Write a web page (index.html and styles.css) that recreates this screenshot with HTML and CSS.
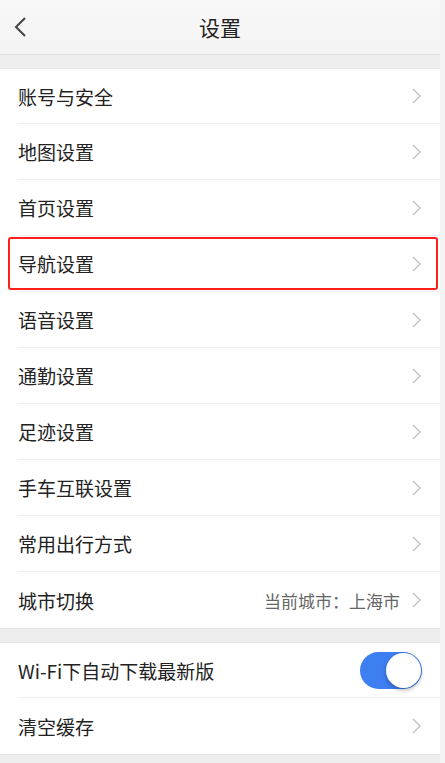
FILE: index.html
```html
<!DOCTYPE html>
<html lang="zh">
<head>
<meta charset="utf-8">
<link rel="stylesheet" href="styles.css">
</head>
<body>
<div class="page">
  <header class="header">
    <svg class="back" width="14" height="22" viewBox="0 0 14 22"><path d="M12 2 L3 11 L12 20" fill="none" stroke="#444" stroke-width="2"/></svg>
    <div class="title">设置</div>
  </header>
  <div class="gap"></div>
  <section class="group">
    <div class="row"><span class="label">账号与安全</span><svg class="chev" viewBox="0 0 10 18"><path d="M1 1 L9 9 L1 17" fill="none" stroke="#b8b8b8" stroke-width="1.3"/></svg></div>
    <div class="row"><span class="label">地图设置</span><svg class="chev" viewBox="0 0 10 18"><path d="M1 1 L9 9 L1 17" fill="none" stroke="#b8b8b8" stroke-width="1.3"/></svg></div>
    <div class="row"><span class="label">首页设置</span><svg class="chev" viewBox="0 0 10 18"><path d="M1 1 L9 9 L1 17" fill="none" stroke="#b8b8b8" stroke-width="1.3"/></svg></div>
    <div class="row highlight"><span class="label">导航设置</span><svg class="chev" viewBox="0 0 10 18"><path d="M1 1 L9 9 L1 17" fill="none" stroke="#b8b8b8" stroke-width="1.3"/></svg><div class="redbox"></div></div>
    <div class="row"><span class="label">语音设置</span><svg class="chev" viewBox="0 0 10 18"><path d="M1 1 L9 9 L1 17" fill="none" stroke="#b8b8b8" stroke-width="1.3"/></svg></div>
    <div class="row"><span class="label">通勤设置</span><svg class="chev" viewBox="0 0 10 18"><path d="M1 1 L9 9 L1 17" fill="none" stroke="#b8b8b8" stroke-width="1.3"/></svg></div>
    <div class="row"><span class="label">足迹设置</span><svg class="chev" viewBox="0 0 10 18"><path d="M1 1 L9 9 L1 17" fill="none" stroke="#b8b8b8" stroke-width="1.3"/></svg></div>
    <div class="row"><span class="label">手车互联设置</span><svg class="chev" viewBox="0 0 10 18"><path d="M1 1 L9 9 L1 17" fill="none" stroke="#b8b8b8" stroke-width="1.3"/></svg></div>
    <div class="row"><span class="label">常用出行方式</span><svg class="chev" viewBox="0 0 10 18"><path d="M1 1 L9 9 L1 17" fill="none" stroke="#b8b8b8" stroke-width="1.3"/></svg></div>
    <div class="row last"><span class="label">城市切换</span><span class="value">当前城市：上海市</span><svg class="chev" viewBox="0 0 10 18"><path d="M1 1 L9 9 L1 17" fill="none" stroke="#b8b8b8" stroke-width="1.3"/></svg></div>
  </section>
  <div class="gap"></div>
  <section class="group">
    <div class="row"><span class="label">Wi-Fi下自动下载最新版</span><div class="toggle"><div class="knob"></div></div></div>
    <div class="row last"><span class="label">清空缓存</span><svg class="chev" viewBox="0 0 10 18"><path d="M1 1 L9 9 L1 17" fill="none" stroke="#b8b8b8" stroke-width="1.3"/></svg></div>
  </section>
  <div class="gap tail"></div>
</div>
</body>
</html>
```
FILE: styles.css
```css
html, body {
  margin: 0;
  padding: 0;
  background: #f0f0f0;
}
body {
  font-family: "Noto Sans CJK SC", "Noto Sans", sans-serif;
  color: #222;
  width: 445px;
  height: 763px;
  overflow: hidden;
}
.page {
  width: 440px;
  background: #efefef;
  border-right: 5px solid #f4f4f4;
  min-height: 763px;
}
.header {
  height: 54px;
  background: linear-gradient(#f8f8f8, #f4f4f4);
  border-bottom: 1px solid #dedede;
  display: flex;
  align-items: center;
  justify-content: center;
  position: relative;
}
.back {
  position: absolute;
  left: 13px;
  top: 16px;
}
.title {
  font-size: 21px;
  color: #222;
  line-height: 1;
}
.gap {
  height: 13px;
  background: #eeeeee;
}
.tail {
  height: 10px;
}
.group {
  background: #fff;
  border-top: 1px solid #e6e6e6;
  border-bottom: 1px solid #e6e6e6;
}
.row {
  height: 56px;
  box-sizing: border-box;
  margin-left: 18px;
  padding-right: 19px;
  border-bottom: 1px solid #ececec;
  display: flex;
  align-items: center;
  position: relative;
}
.group .row:first-child { height: 55px; }
.row.last {
  border-bottom: none;
}
.label {
  font-size: 19px;
  flex: 1;
  line-height: 1;
  color: #222;
}
.value {
  font-size: 17px;
  color: #666;
  margin-right: 12px;
  line-height: 1;
}
.chev {
  width: 9px;
  height: 16px;
}
.redbox {
  position: absolute;
  left: -10px;
  right: 2px;
  top: 1px;
  bottom: 1px;
  border: 2px solid #ff1f1a;
  border-radius: 3px;
}
.toggle {
  width: 62px;
  height: 37px;
  border-radius: 19px;
  background: #3d7ef0;
  position: relative;
  margin-right: -1px;
}
.knob {
  position: absolute;
  right: 1px;
  top: 1px;
  width: 35px;
  height: 35px;
  border-radius: 50%;
  background: #fff;
  box-shadow: 0 2px 4px rgba(0,0,0,0.3);
}
```
